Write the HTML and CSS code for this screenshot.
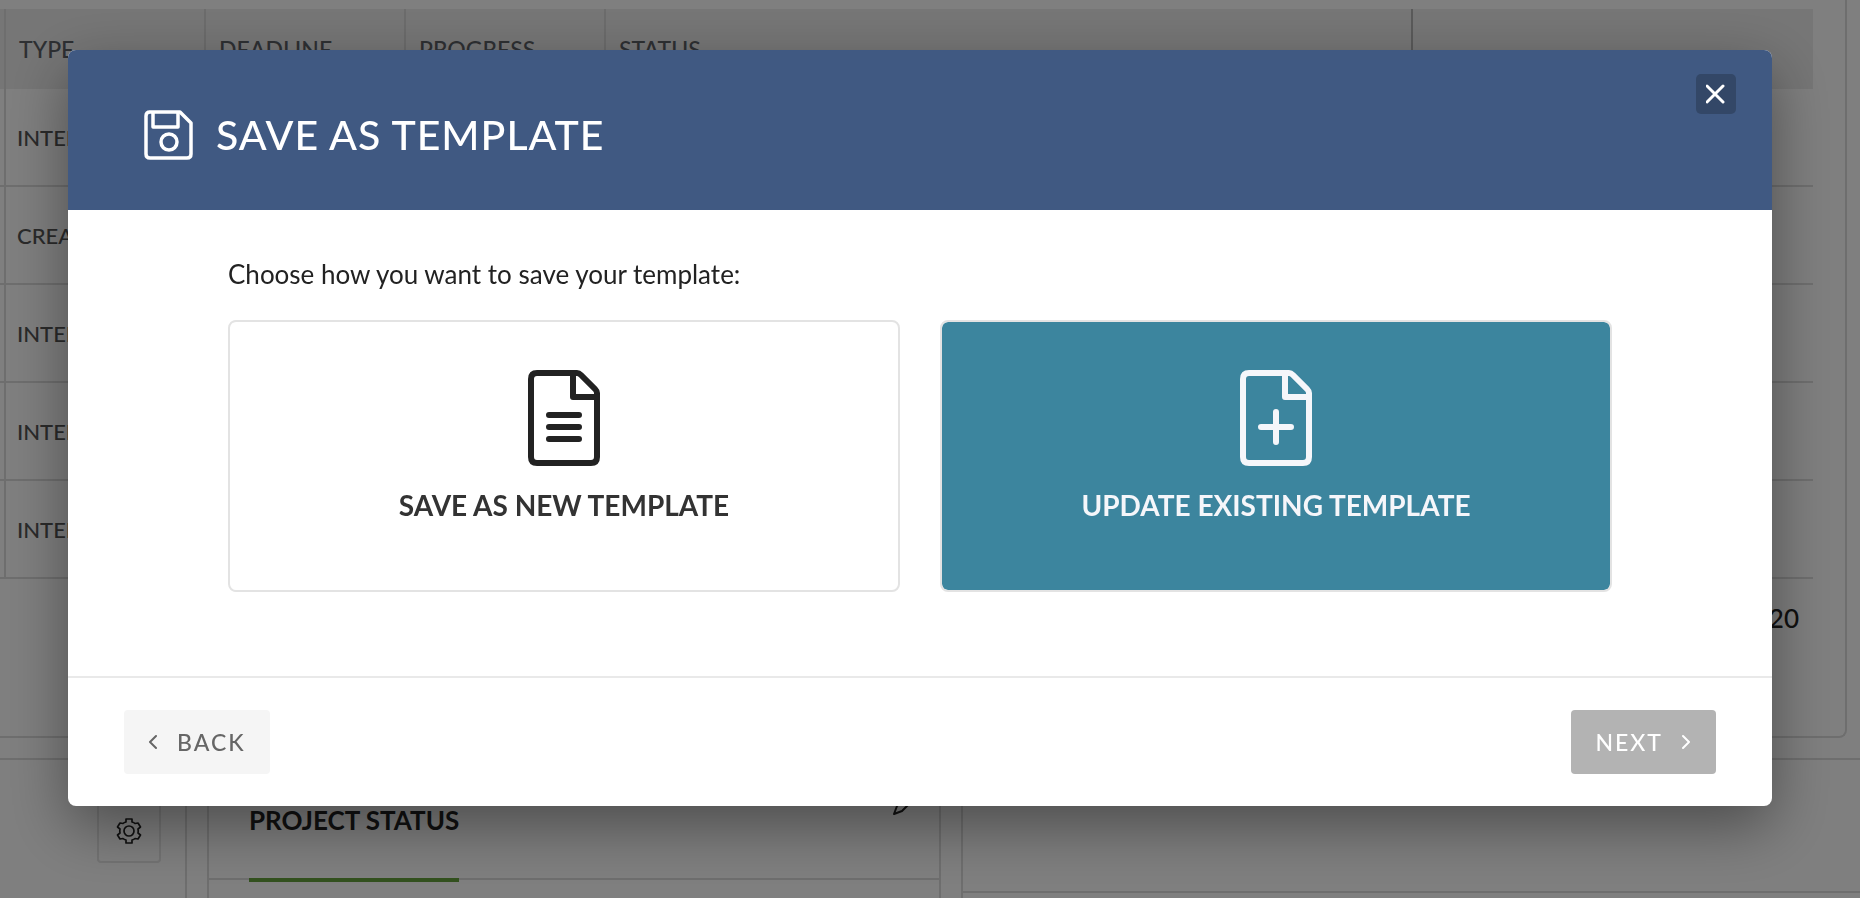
FILE: index.html
```html
<!DOCTYPE html>
<html lang="en">
<head>
<meta charset="utf-8">
<title>Save as Template</title>
<link rel="stylesheet" href="styles.css">
</head>
<body>

  <main class="page">
    <section class="table-panel">
      <table class="task-table">
        <colgroup>
          <col class="col-edge">
          <col class="col-small">
          <col class="col-small">
          <col class="col-small">
          <col class="col-status">
          <col>
        </colgroup>
        <thead>
          <tr><th></th><th>TYPE</th><th>DEADLINE</th><th>PROGRESS</th><th class="split">STATUS</th><th></th></tr>
        </thead>
        <tbody>
          <tr><td></td><td>INTERNAL</td><td></td><td></td><td></td><td></td></tr>
          <tr><td></td><td>CREATIVE</td><td></td><td></td><td></td><td></td></tr>
          <tr><td></td><td>INTERNAL</td><td></td><td></td><td></td><td></td></tr>
          <tr><td></td><td>INTERNAL</td><td></td><td></td><td></td><td></td></tr>
          <tr><td></td><td>INTERNAL</td><td></td><td></td><td></td><td></td></tr>
        </tbody>
      </table>
      <div class="table-count">20</div>
    </section>

    <div class="widgets">
      <section class="widget widget-left">
        <button class="gear-button" aria-label="Settings">
          <svg width="28" height="28" viewBox="0 0 28 28" fill="none" stroke="currentColor" stroke-width="1.7" stroke-linejoin="round">
            <path d="M11 2h6v3q2 .5 3 1.500L23 6l2.500 4-2.500 2q.5 2 0 4l2.500 2-2.500 4-3-.5q-1 1-3 1.500v3h-6v-3q-2-.5-3-1.500L5 22l-2.500-4L5 16q-.5-2 0-4l-2.500-2L5 6l3 .5Q9 5.500 11 5z"/>
            <circle cx="14" cy="14" r="5"/>
          </svg>
        </button>
      </section>
      <section class="widget widget-status">
        <div class="widget-head">
          <h2>PROJECT STATUS</h2>
          <button class="edit-button" aria-label="Edit">
            <svg width="24" height="24" viewBox="0 0 24 24" fill="none" stroke="currentColor" stroke-width="2" stroke-linejoin="round">
              <path d="M1 23l3-8L18 1l5 5L9 20z"/>
            </svg>
          </button>
        </div>
      </section>
      <section class="widget widget-right">
        <div class="widget-head"></div>
      </section>
    </div>
  </main>

  <div class="overlay">
    <div class="modal" role="dialog" aria-labelledby="modal-title">
      <header class="modal-header">
        <svg width="50" height="50" viewBox="0 0 50 50" fill="none" stroke="currentColor" stroke-width="3.5" stroke-linejoin="round">
          <path d="M5 2h31l11 11v31q0 4-4 4H6q-4 0-4-4V6q0-4 4-4z"/>
          <path d="M9 2v15h25V2"/>
          <circle cx="25" cy="32" r="8"/>
        </svg>
        <h1 id="modal-title">SAVE AS TEMPLATE</h1>
        <button class="close-button" aria-label="Close">
          <svg width="20" height="20" viewBox="0 0 20 20" fill="none" stroke="currentColor" stroke-width="3" stroke-linecap="round">
            <path d="M1 2l16 16M17 2L1 18"/>
          </svg>
        </button>
      </header>

      <div class="modal-body">
        <p>Choose how you want to save your template:</p>
        <div class="options">
          <button class="option">
            <svg width="72" height="96" viewBox="0 0 72 96" fill="none" stroke="#222" stroke-width="6" stroke-linecap="round" stroke-linejoin="round">
              <path d="M9 3h40q2 0 4 2l14 14q2 2 2 4v64q0 6-6 6H9q-6 0-6-6V9q0-6 6-6z"/>
              <path d="M45 4v23h23"/>
              <path d="M21 45h30M21 57h30M21 69h30"/>
            </svg>
            <span>SAVE AS NEW TEMPLATE</span>
          </button>
          <button class="option selected">
            <svg width="72" height="96" viewBox="0 0 72 96" fill="none" stroke="currentColor" stroke-width="6" stroke-linecap="round" stroke-linejoin="round">
              <path d="M9 3h40q2 0 4 2l14 14q2 2 2 4v64q0 6-6 6H9q-6 0-6-6V9q0-6 6-6z"/>
              <path d="M45 4v23h23"/>
              <path d="M21 57h30M36 42v30"/>
            </svg>
            <span>UPDATE EXISTING TEMPLATE</span>
          </button>
        </div>
      </div>

      <footer class="modal-footer">
        <button class="back-button">
          <svg width="10" height="16" viewBox="0 0 10 16" fill="none" stroke="currentColor" stroke-width="2" stroke-linecap="round" stroke-linejoin="round">
            <path d="M8 2L2 8l6 6"/>
          </svg>
          BACK
        </button>
        <button class="next-button">
          NEXT
          <svg width="10" height="16" viewBox="0 0 10 16" fill="none" stroke="currentColor" stroke-width="2" stroke-linecap="round" stroke-linejoin="round">
            <path d="M1 2l6 6-6 6"/>
          </svg>
        </button>
      </footer>
    </div>
  </div>

</body>
</html>
```

FILE: styles.css
```css
* {
  box-sizing: border-box;
}
body {
  margin: 0;
  font-family: Lato, "Liberation Sans", sans-serif;
  background-color: white;
  color: #222;
  overflow: hidden;
}
h1, h2, p {
  margin: 0;
}
button {
  font-family: inherit;
  border: none;
  padding: 0;
  cursor: pointer;
}
svg {
  display: block;
  flex: none;
}

/* page behind the modal */
.page {
  display: flex;
  flex-direction: column;
  gap: 20px;
  height: 100vh;
}
.table-panel {
  margin-right: 13px;
  padding: 9px 32px 0 0;
  border-right: 2px solid #ddd;
  border-bottom: 2px solid #ddd;
  border-bottom-right-radius: 8px;
}
.task-table {
  width: 100%;
  table-layout: fixed;
  border-collapse: separate;
  border-spacing: 0;
  font-size: 22px;
  font-weight: 500;
}
.col-edge {
  width: 6px;
}
.col-small {
  width: 200px;
}
.col-status {
  width: 807px;
}
th {
  height: 80px;
  padding: 0 13px;
  background-color: #ededed;
  border-right: 2px solid #d8d8d8;
  color: #5c6066;
  font-size: 23px;
  font-weight: 500;
  text-align: left;
}
th.split {
  border-right-color: #b4b4b4;
}
td {
  height: 98px;
  padding: 0 11px;
  border-bottom: 2px solid #ddd;
  color: #555;
}
th:first-child,
td:first-child {
  padding: 0;
  border-right: 2px solid #ddd;
}
th:last-child {
  border-right: none;
}
.table-count {
  padding: 23px 14px 0 0;
  height: 157px;
  font-size: 26px;
  font-weight: 500;
  line-height: 32px;
  text-align: right;
}
.widgets {
  flex: 1;
  display: flex;
  gap: 20px;
}
.widget {
  border: 2px solid #ddd;
  border-bottom: none;
}
.widget-left {
  display: flex;
  justify-content: flex-end;
  align-items: flex-start;
  flex: 0 0 187px;
  padding: 39px 24px 0 0;
  border-left: none;
}
.gear-button {
  display: flex;
  align-items: center;
  justify-content: center;
  width: 64px;
  height: 64px;
  border: 2px solid #e6e6e6;
  border-radius: 4px;
  background-color: transparent;
  color: #222;
}
.widget-status {
  flex: 0 0 734px;
}
.widget-right {
  flex: 1;
  border-right: none;
}
.widget-head {
  display: flex;
  align-items: flex-start;
  justify-content: space-between;
  height: 120px;
  padding: 31px 22px 0 40px;
  border-bottom: 2px solid #ddd;
}
.widget-right .widget-head {
  height: 133px;
}
.widget-head h2 {
  height: 91px;
  padding-top: 13px;
  border-bottom: 4px solid #66a33d;
  font-size: 26px;
  line-height: 32px;
}
.edit-button {
  background-color: transparent;
  color: #222;
}

/* modal */
.overlay {
  position: fixed;
  inset: 0;
  padding: 50px 88px 0 68px;
  background-color: rgba(0, 0, 0, 0.5);
}
.modal {
  overflow: hidden;
  border-radius: 8px;
  background-color: white;
  box-shadow: 0 20px 60px rgba(0, 0, 0, 0.4);
}
.modal-header {
  position: relative;
  display: flex;
  align-items: center;
  gap: 22px;
  padding: 57px 76px 47px;
  background-color: #405982;
  color: white;
}
.modal-header h1 {
  font-size: 41px;
  font-weight: 500;
  line-height: 56px;
  letter-spacing: 1px;
}
.close-button {
  position: absolute;
  top: 24px;
  right: 36px;
  display: flex;
  align-items: center;
  justify-content: center;
  width: 40px;
  height: 40px;
  border-radius: 5px;
  background-color: #334767;
  color: white;
}
.modal-body {
  padding: 48px 160px 84px;
}
.modal-body p {
  margin-bottom: 30px;
  font-size: 26px;
  line-height: 32px;
}
.options {
  display: grid;
  grid-template-columns: 1fr 1fr;
  gap: 40px;
}
.option {
  display: flex;
  flex-direction: column;
  align-items: center;
  gap: 23px;
  height: 272px;
  padding-top: 48px;
  border: 2px solid #e3e3e3;
  border-radius: 8px;
  background-color: white;
  color: #333;
  font-size: 28px;
  font-weight: bold;
  line-height: 32px;
}
.option.selected {
  background-color: #3c859e;
  background-clip: padding-box;
  color: #f5f6fa;
}
.modal-footer {
  display: flex;
  justify-content: space-between;
  padding: 32px 56px;
  border-top: 2px solid #e9e9e9;
}
.back-button,
.next-button {
  display: flex;
  align-items: center;
  gap: 19px;
  height: 64px;
  padding: 0 24px 1px;
  border-radius: 4px;
  font-size: 23px;
  font-weight: 500;
  letter-spacing: 2px;
}
.back-button {
  background-color: #f5f5f5;
  color: #666;
}
.next-button {
  background-color: #b3b3b3;
  color: white;
}
```
